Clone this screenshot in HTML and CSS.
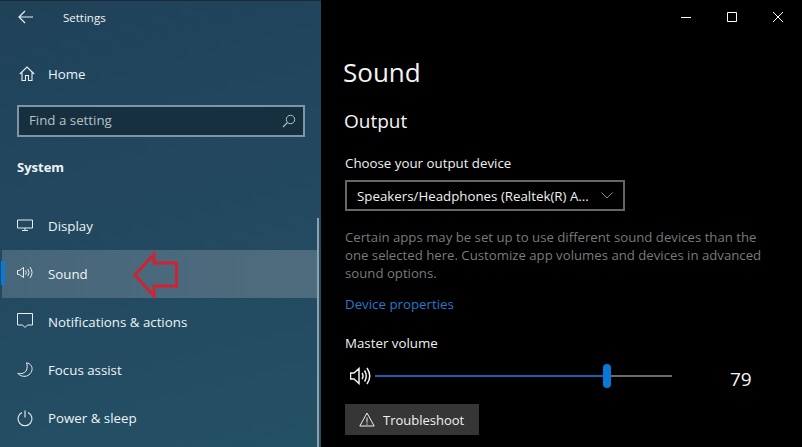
FILE: index.html
```html
<!DOCTYPE html>
<html lang="en">
<head>
<meta charset="utf-8">
<title>Settings</title>
<link rel="stylesheet" href="styles.css">
</head>
<body>
<div class="window">
  <aside class="side">
    <div class="titlebar">
      <svg class="back" width="16" height="14" viewBox="0 0 16 14"><path d="M7 1 1 7l6 6M1 7h14" fill="none" stroke="#e8eef2" stroke-width="1.2"/></svg>
      <span class="apptitle">Settings</span>
    </div>
    <div class="home">
      <svg class="ico" width="16" height="16" viewBox="0 0 16 16"><path d="M.8 8 8 1l7.200 7M3 6.500V14.500h3.500V9.500h3v5H13V6.500" fill="none" stroke="#e8eef2" stroke-width="1.1"/></svg>
      <span>Home</span>
    </div>
    <div class="search">
      <span>Find a setting</span>
      <svg width="14" height="14" viewBox="0 0 14 14"><circle cx="8.500" cy="5.500" r="4.200" fill="none" stroke="#b4c0c8" stroke-width="1"/><path d="M5.500 8.500 1 13" stroke="#b4c0c8" stroke-width="1.1"/></svg>
    </div>
    <div class="group">System</div>
    <nav class="nav">
      <div class="item">
        <svg class="ico" width="16" height="16" viewBox="0 0 16 16"><path d="M.5 2h15v8H.5zM5 12.500h6M8 10v2.500" fill="none" stroke="#e8eef2" stroke-width="1"/></svg>
        <span>Display</span>
      </div>
      <div class="item active">
        <svg class="ico" width="16" height="16" viewBox="0 0 16 16"><path d="M.5 4.500h2L6.500 1.500v10l-4-3h-2zM8.500 4.500q1.500 2 0 4M10.800 3q2.500 3.500 0 7M13 1q4 5.500 0 11" fill="none" stroke="#e8eef2" stroke-width="1"/></svg>
        <span>Sound</span>
      </div>
      <div class="item">
        <svg class="ico" width="16" height="16" viewBox="0 0 16 16"><path d="M.5-.5h15V11h-5L8 13.500 5.500 11h-5z" fill="none" stroke="#e8eef2" stroke-width="1"/></svg>
        <span>Notifications &amp; actions</span>
      </div>
      <div class="item">
        <svg class="ico" width="16" height="16" viewBox="0 0 16 16"><path d="M9.500 .8c4 .8 6 3.500 5.500 7-.6 4-4.500 7-8.500 6.500C4 14 2 13 .8 11.300c4 1 7.500-.3 8.700-3.300 1-2.500.8-5 0-7.200z" fill="none" stroke="#e8eef2" stroke-width="1"/></svg>
        <span>Focus assist</span>
      </div>
      <div class="item">
        <svg class="ico" width="16" height="16" viewBox="0 0 16 16"><path d="M8 .5v7M5 2.500a7 7 0 1 0 6 0" fill="none" stroke="#e8eef2" stroke-width="1.100"/></svg>
        <span>Power &amp; sleep</span>
      </div>
    </nav>
    <div class="scrollbar"></div>
    <svg class="arrow" width="46" height="48" viewBox="0 0 46 48"><path d="M2 24 21 3v9h22.500v23H21v10z" fill="none" stroke="#d5202f" stroke-width="2.800"/></svg>
  </aside>
  <main class="main">
    <div class="controls">
      <svg width="12" height="12" viewBox="0 0 12 12"><path d="M1 6.500h10" stroke="#fff" stroke-width="1"/></svg>
      <svg width="12" height="12" viewBox="0 0 12 12"><path d="M1.500 1.500h9v9h-9z" fill="none" stroke="#fff" stroke-width="1"/></svg>
      <svg width="12" height="12" viewBox="0 0 12 12"><path d="M1 1l10 10M11 1 1 11" stroke="#fff" stroke-width="1"/></svg>
    </div>
    <h1>Sound</h1>
    <h2>Output</h2>
    <div class="label">Choose your output device</div>
    <div class="select">
      <span>Speakers/Headphones (Realtek(R) A...</span>
      <svg width="12" height="7" viewBox="0 0 12 7"><path d="M.5.500 6 6l5.500-5.500" fill="none" stroke="#8a8a8a" stroke-width="1"/></svg>
    </div>
    <p class="desc">Certain apps may be set up to use different sound devices than the one selected here. Customize app volumes and devices in advanced sound options.</p>
    <div class="link">Device properties</div>
    <div class="label vol-label">Master volume</div>
    <div class="volume">
      <svg width="21" height="18" viewBox="0 0 21 18"><path d="M.5 6h3.500L9 1.500v15L4 12H.5zM12 6q2 3 0 6M14.500 3.500q3.500 5.500 0 11M17 1q5.500 8 0 16" fill="none" stroke="#f2f2f2" stroke-width="1.500"/></svg>
      <div class="slider"><div class="fill"></div><div class="thumb"></div><div class="rest"></div></div>
      <div class="value">79</div>
    </div>
    <div class="button">
      <svg width="16" height="15" viewBox="0 0 16 15"><path d="M8 1 .8 14h14.400zM8 5.500v5M8 11.500v1.200" fill="none" stroke="#f0f0f0" stroke-width="1"/></svg>
      <span>Troubleshoot</span>
    </div>
  </main>
</div>
</body>
</html>
```
FILE: styles.css
```css
* { box-sizing: border-box; }
html, body { margin: 0; padding: 0; background: #000; }
body { font-family: "Open Sans", "Noto Sans", "Liberation Sans", sans-serif; color: #fff; }
.window { display: flex; width: 802px; height: 447px; overflow: hidden; }

.side {
  position: relative;
  flex: 0 0 321px;
  height: 447px;
  padding-top: 1px;
  background: linear-gradient(165deg, #1f4259 0%, #22475f 40%, #245064 100%);
  border-top: 1px solid #1a2a38;
  overflow: hidden;
  font-size: 13.300px;
  color: #eef3f6;
}
.ico { overflow: visible; }
.titlebar { display: flex; align-items: center; height: 30px; padding-left: 18px; }
.back { margin-right: 29px; }
.apptitle { font-size: 11.500px; }
.home { display: flex; align-items: center; height: 48px; margin-top: 18px; padding-left: 19px; }
.home .ico { margin-right: 13px; }
.search {
  display: flex; align-items: center; justify-content: space-between;
  width: 288px; height: 32px; margin: 7px 0 0 17px; padding: 0 7px 0 10px;
  background: #17303f; border: 2px solid #7d95a4;
  color: #b4c0c8;
}
.search span { margin-top: -2px; }
.group { margin: 20px 0 0 17px; height: 20px; line-height: 20px; font-weight: 700; font-size: 13px; }
.nav { margin-top: 25px; }
.item { display: flex; align-items: center; height: 48px; padding-left: 15px; margin: 0 3px 0 2px; position: relative; }
.item .ico { margin-right: 15px; }
.item.active { background: linear-gradient(90deg, #47667a, #4f6c7e); }
.item.active::before { content: ""; position: absolute; left: -1px; top: 11px; width: 4px; height: 24px; background: #0a78d6; }
.scrollbar { position: absolute; left: 317px; top: 217px; width: 2px; height: 230px; background: #8da0ad; }
.arrow { position: absolute; left: 133px; top: 250px; }

.main { flex: 1; position: relative; padding: 54px 0 0 23px; background: #000; font-size: 13.300px; }
.controls { position: absolute; top: 11px; right: 18px; display: flex; gap: 34px; }
h1 { margin: 0 0 0 -1px; font-size: 26px; font-weight: 400; line-height: 36px; color: #f4f4f4; }
h2 { margin: 18px 0 0; font-size: 19px; font-weight: 400; line-height: 26px; color: #f4f4f4; }
.label { color: #f0f0f0; line-height: 20px; padding-left: 1px; }
h2 + .label { margin-top: 19px; }
.select {
  display: flex; align-items: center; justify-content: space-between;
  width: 280px; height: 31px; margin: 7px 0 0 1px; padding: 0 10px;
  border: 2px solid #666; color: #f0f0f0;
}
.select span { white-space: nowrap; }
.desc { margin: 17px 0 0 1px; width: 424px; color: #7a7a7a; line-height: 18px; font-size: 13.200px; }
.link { margin: 12px 0 0 1px; color: #2878c8; line-height: 20px; }
.vol-label { margin-top: 19px; }
.volume { display: flex; align-items: center; height: 24px; margin: 11px 0 0 6px; }
.slider { display: flex; align-items: center; width: 297px; margin-left: 4px; }
.fill { width: 228px; height: 2px; background: #1a5fb0; }
.thumb { width: 8px; height: 24px; border-radius: 4px; background: #0a78d6; }
.rest { flex: 1; height: 2px; background: #6a6a6a; }
.value { margin: 6px 0 0 58px; font-size: 19px; color: #f4f4f4; }
.button {
  display: flex; align-items: center; gap: 8px;
  width: 134px; height: 31px; margin: 16px 0 0 1px; padding-left: 14px;
  background: #363636; color: #f0f0f0;
}
.button span { font-size: 13px; }
```
